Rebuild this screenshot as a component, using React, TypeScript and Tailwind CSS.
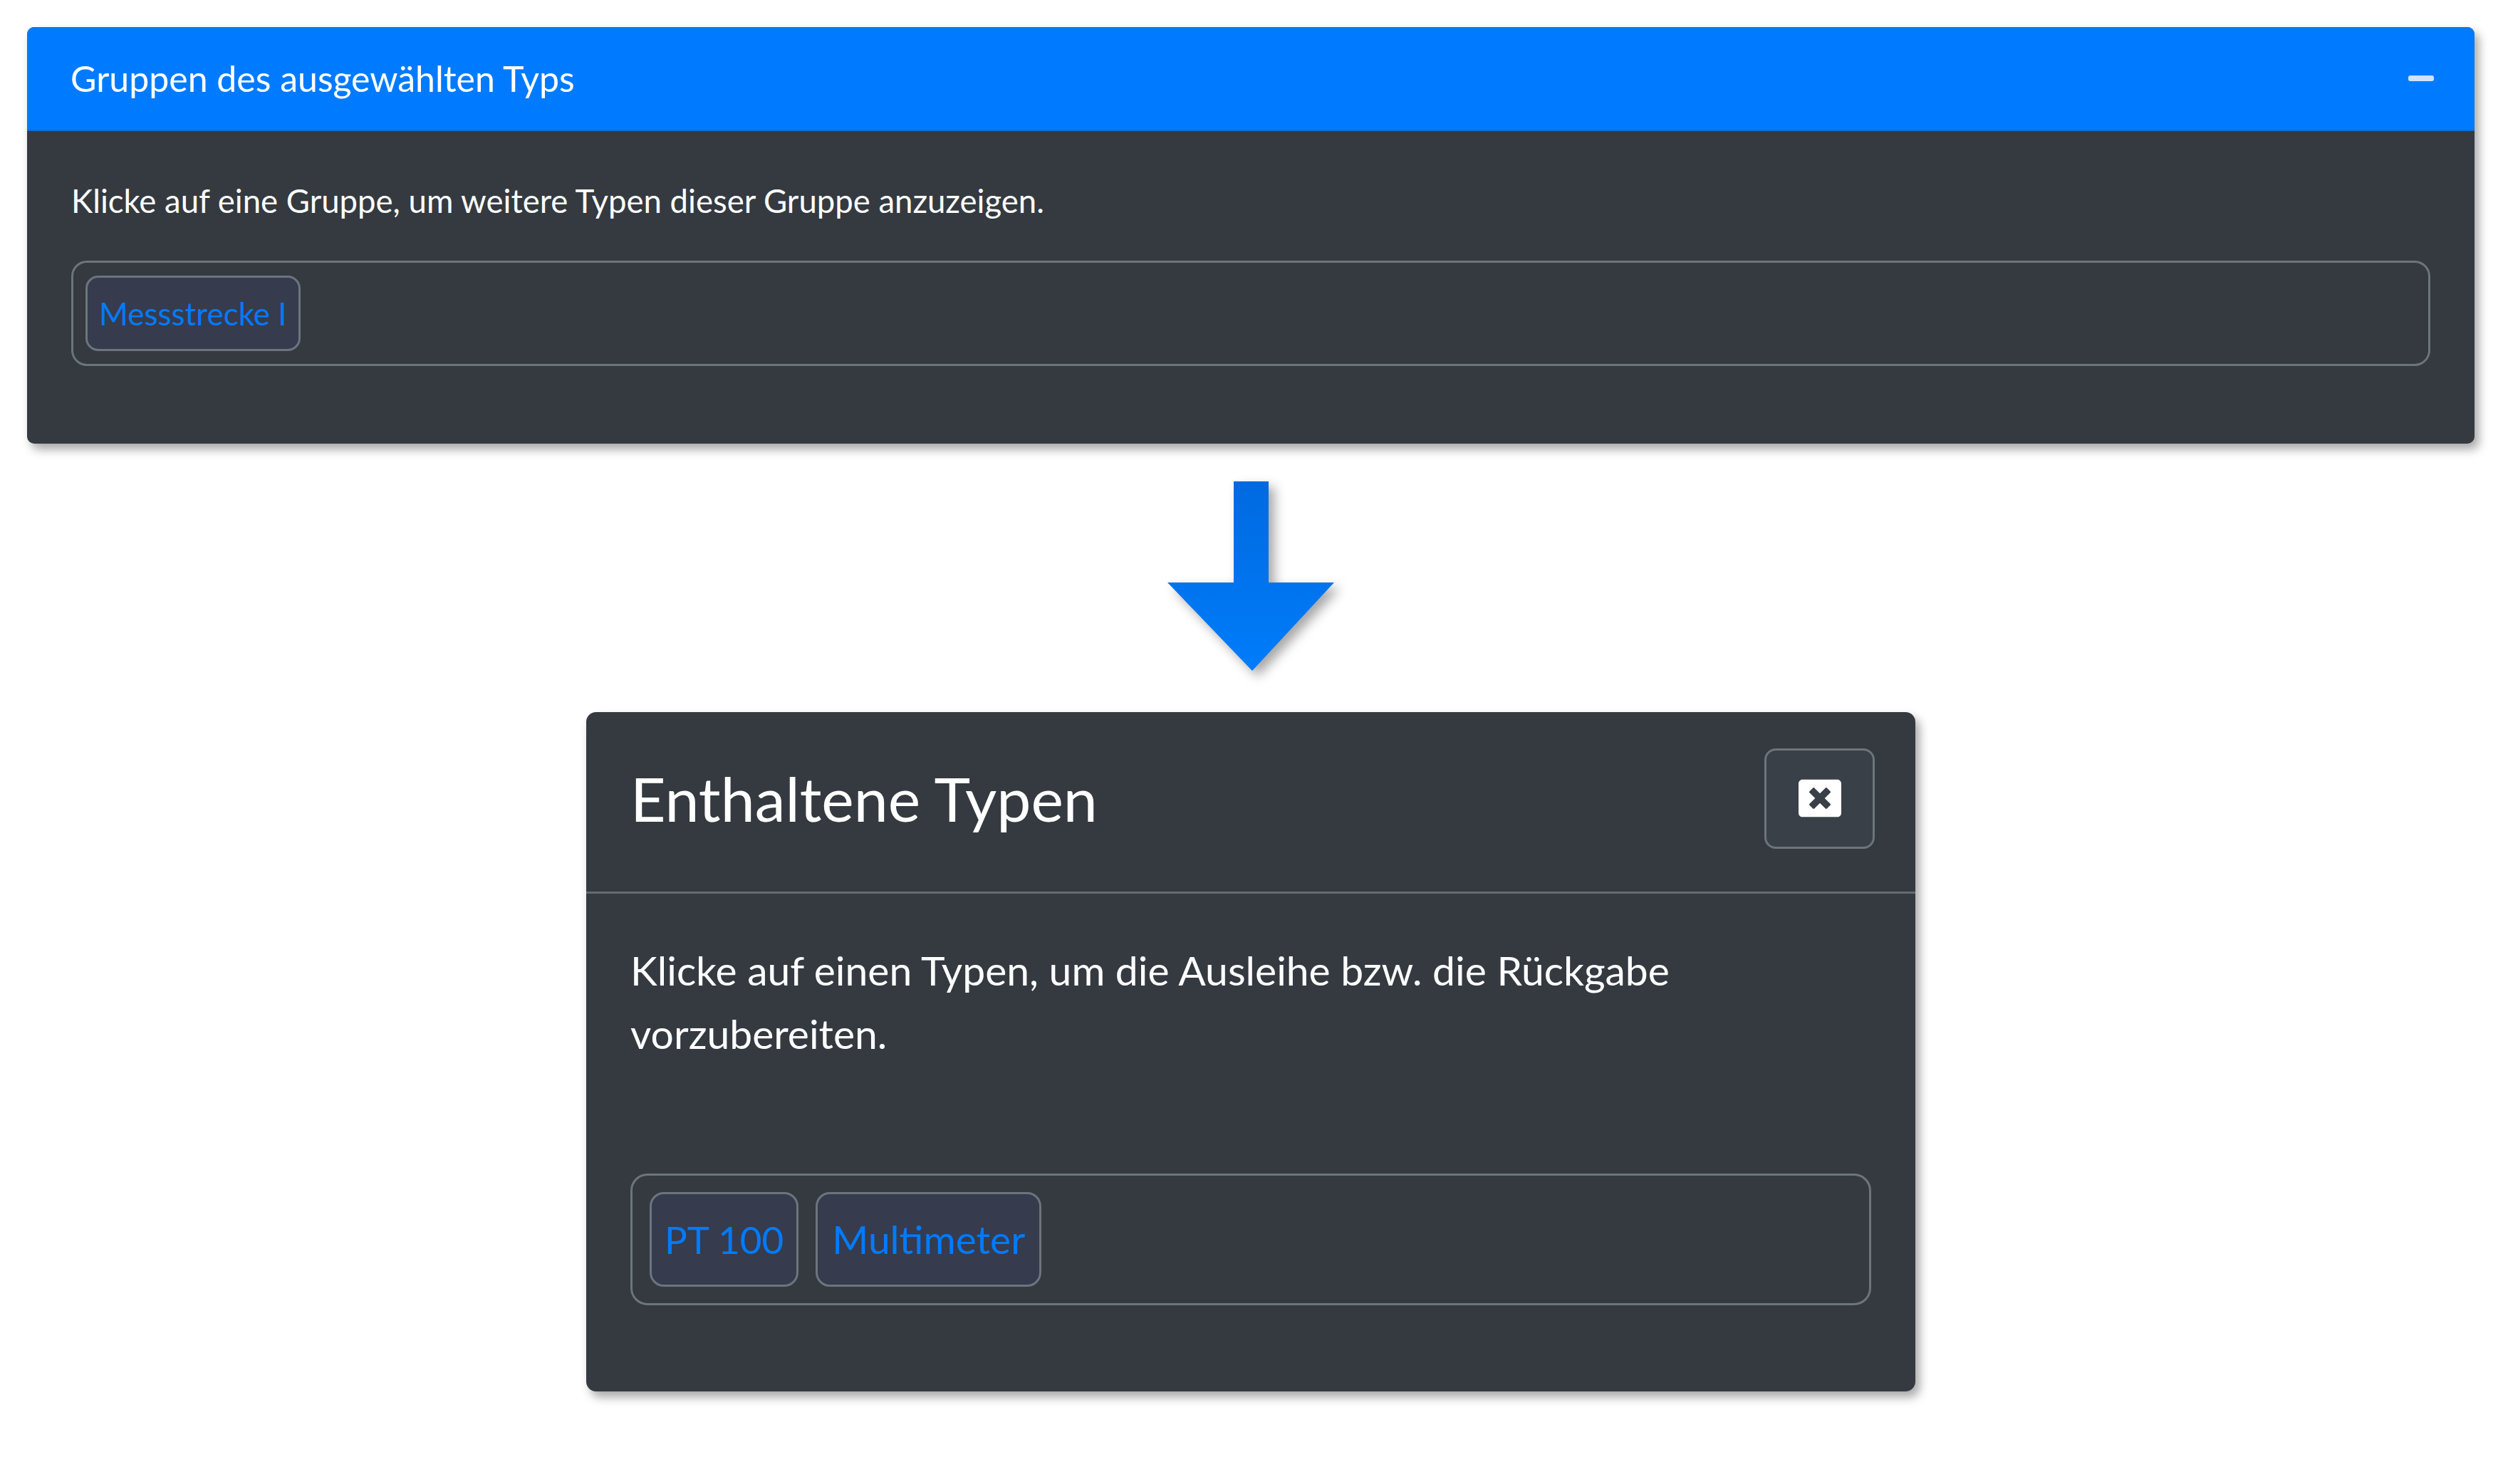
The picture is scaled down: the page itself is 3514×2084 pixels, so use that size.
import React from "react";
import { FaWindowClose } from "react-icons/fa";

function DownArrow() {
  return (
    <svg width="234" height="266" viewBox="0 0 234 266" className="drop-shadow-[8px_8px_8px_rgba(0,0,0,0.35)] overflow-visible">
      <defs>
        <linearGradient id="arrowGrad" x1="0" y1="0" x2="0" y2="1">
          <stop offset="0" stopColor="#006ae0" />
          <stop offset="1" stopColor="#007cfa" />
        </linearGradient>
      </defs>
      <polygon
        points="93,0 142,0 142,142 234,142 119,266 0,142 93,142"
        fill="url(#arrowGrad)"
      />
    </svg>
  );
}

export default function App() {
  return (
    <div className="min-h-[2084px] w-full bg-white pt-[38px] pl-[38px] pr-[40px] font-['Lato',sans-serif]">
      {/* Top card */}
      <div className="overflow-hidden rounded-[10px] bg-[#343a40] shadow-[6px_8px_14px_rgba(0,0,0,0.35)]">
        <div className="flex h-[146px] items-center justify-between border-b-2 border-[#0a6fd8] bg-[#007bff] pl-[61px] pr-[57px]">
          <span className="text-[50px] leading-none text-white">Gruppen des ausgewählten Typs</span>
          <div className="h-[8px] w-[36px] rounded-[3px] bg-[#cfe2ff]" />
        </div>
        <div className="px-[62px] pt-[63px] pb-[109px]">
          <p className="text-[45.5px] leading-[70px] text-white">
            Klicke auf eine Gruppe, um weitere Typen dieser Gruppe anzuzeigen.
          </p>
          <div className="mt-[49px] flex h-[148px] items-center rounded-[22px] border-[3px] border-[#6c757d] px-[17px]">
            <button className="flex h-[106px] items-center rounded-[18px] border-[3px] border-[#6c757d] bg-[#363b4e] px-[16px] text-[44px] leading-none text-[#007bff]">
              Messstrecke I
            </button>
          </div>
        </div>
      </div>

      {/* Arrow */}
      <div className="mt-[53px] flex justify-center">
        <DownArrow />
      </div>

      {/* Modal */}
      <div className="mx-auto mt-[58px] w-[1866px] overflow-hidden rounded-[14px] bg-[#343a40] shadow-[6px_8px_14px_rgba(0,0,0,0.35)]">
        <div className="flex h-[255px] items-center justify-between border-b-[3px] border-[#646b73] pb-[10px] pl-[62px] pr-[57px]">
          <span className="text-[86px] leading-none text-white">Enthaltene Typen</span>
          <button className="flex h-[141px] w-[155px] items-center justify-center rounded-[16px] border-[3px] border-[#6c757d] bg-[#3a4047]">
            <FaWindowClose size={60} color="#ffffff" />
          </button>
        </div>
        <div className="px-[62px] pt-[63px] pb-[121px]">
          <p className="text-[57px] leading-[89px] text-white">
            Klicke auf einen Typen, um die Ausleihe bzw. die Rückgabe
            <br />
            vorzubereiten.
          </p>
          <div className="mt-[152px] flex h-[185px] items-center gap-[24px] rounded-[24px] border-[3px] border-[#6c757d] px-[24px]">
            <button className="flex h-[133px] items-center rounded-[20px] border-[3px] border-[#6c757d] bg-[#363b4e] px-[18px] text-[53px] leading-none text-[#007bff]">
              PT 100
            </button>
            <button className="flex h-[133px] items-center rounded-[20px] border-[3px] border-[#6c757d] bg-[#363b4e] px-[20px] text-[55px] leading-none text-[#007bff]">
              Multimeter
            </button>
          </div>
        </div>
      </div>
    </div>
  );
}
